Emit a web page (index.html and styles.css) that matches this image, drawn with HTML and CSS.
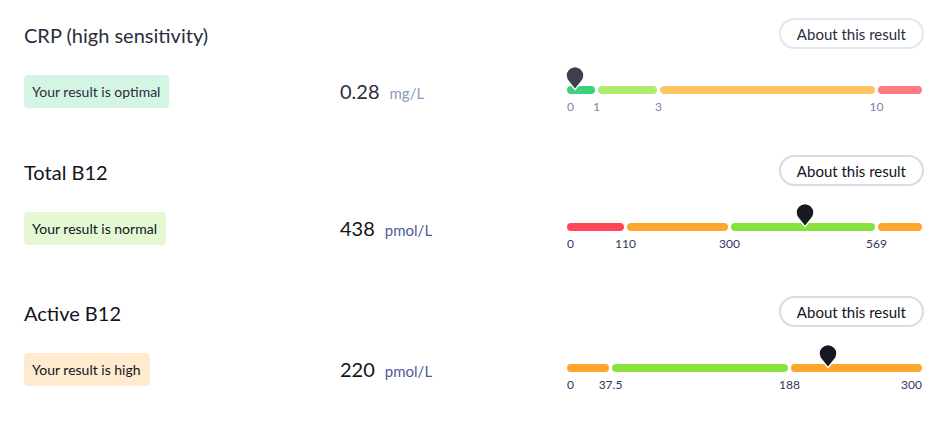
FILE: index.html
```html
<!DOCTYPE html>
<html lang="en">
<head>
<meta charset="utf-8">
<title>Results</title>
<link rel="stylesheet" href="styles.css">
</head>
<body>
<main class="results">

  <section class="result result--dim">
    <div class="result__head">
      <h2 class="result__title">CRP (high sensitivity)</h2>
      <button class="about-btn" type="button">About this result</button>
    </div>
    <div class="result__body">
      <div class="col-status"><span class="badge badge--optimal">Your result is optimal</span></div>
      <div class="col-value"><span class="value">0.28</span><span class="unit">mg/L</span></div>
      <div class="col-range">
        <div class="scale">
          <div class="seg seg--dgreen-dim" style="flex-grow:28"><div class="seg__bar"></div><div class="seg__ticks"><span class="tick tick--first">0</span></div></div>
          <div class="seg seg--lime-dim" style="flex-grow:59"><div class="seg__bar"></div><div class="seg__ticks"><span class="tick">1</span></div></div>
          <div class="seg seg--orange-dim" style="flex-grow:215"><div class="seg__bar"></div><div class="seg__ticks"><span class="tick">3</span></div></div>
          <div class="seg seg--red-dim" style="flex-grow:44"><div class="seg__bar"></div><div class="seg__ticks"><span class="tick">10</span></div></div>
          <svg class="pin" style="left:2.25%" viewBox="0 0 20 26" width="20" height="26" aria-hidden="true"><path d="M10 24.6 L4 17.2 A9 9 0 1 1 16 17.2 Z"/></svg>
        </div>
      </div>
    </div>
  </section>

  <section class="result">
    <div class="result__head">
      <h2 class="result__title">Total B12</h2>
      <button class="about-btn" type="button">About this result</button>
    </div>
    <div class="result__body">
      <div class="col-status"><span class="badge badge--normal">Your result is normal</span></div>
      <div class="col-value"><span class="value">438</span><span class="unit">pmol/L</span></div>
      <div class="col-range">
        <div class="scale">
          <div class="seg seg--red" style="flex-grow:57"><div class="seg__bar"></div><div class="seg__ticks"><span class="tick tick--first">0</span></div></div>
          <div class="seg seg--orange" style="flex-grow:101"><div class="seg__bar"></div><div class="seg__ticks"><span class="tick">110</span></div></div>
          <div class="seg seg--lime" style="flex-grow:144"><div class="seg__bar"></div><div class="seg__ticks"><span class="tick">300</span></div></div>
          <div class="seg seg--orange" style="flex-grow:44"><div class="seg__bar"></div><div class="seg__ticks"><span class="tick">569</span></div></div>
          <svg class="pin" style="left:67.04%" viewBox="0 0 20 26" width="20" height="26" aria-hidden="true"><path d="M10 24.6 L4 17.2 A9 9 0 1 1 16 17.2 Z"/></svg>
        </div>
      </div>
    </div>
  </section>

  <section class="result">
    <div class="result__head">
      <h2 class="result__title">Active B12</h2>
      <button class="about-btn" type="button">About this result</button>
    </div>
    <div class="result__body">
      <div class="col-status"><span class="badge badge--high">Your result is high</span></div>
      <div class="col-value"><span class="value">220</span><span class="unit">pmol/L</span></div>
      <div class="col-range">
        <div class="scale">
          <div class="seg seg--orange" style="flex-grow:42"><div class="seg__bar"></div><div class="seg__ticks"><span class="tick tick--first">0</span></div></div>
          <div class="seg seg--lime" style="flex-grow:176"><div class="seg__bar"></div><div class="seg__ticks"><span class="tick">37.5</span></div></div>
          <div class="seg seg--orange" style="flex-grow:131"><div class="seg__bar"></div><div class="seg__ticks"><span class="tick">188</span><span class="tick tick--last">300</span></div></div>
          <svg class="pin" style="left:73.6%" viewBox="0 0 20 26" width="20" height="26" aria-hidden="true"><path d="M10 24.6 L4 17.2 A9 9 0 1 1 16 17.2 Z"/></svg>
        </div>
      </div>
    </div>
  </section>

</main>
</body>
</html>
```

FILE: styles.css
```css
* { box-sizing: border-box; }

body {
  margin: 0;
  background: #ffffff;
  font-family: Lato, "Noto Sans", sans-serif;
  color: #12141c;
}

.results {
  padding: 0 26px 0 24px;
}

.result {
  padding: 18px 0 27px;
}

.result--dim {
  padding-bottom: 23px;
}

.result__head {
  display: flex;
  justify-content: space-between;
  align-items: center;
  height: 31px;
}

.result__title {
  margin: 0;
  padding-top: 3px;
  font-size: 20px;
  font-weight: 400;
  line-height: 24px;
  color: #12141c;
}

.about-btn {
  height: 31px;
  padding: 0 16px;
  border: 2px solid #d8dae9;
  border-radius: 16px;
  background: #ffffff;
  font-family: Lato, "Noto Sans", sans-serif;
  font-size: 15px;
  color: #12141c;
  cursor: pointer;
}

.result__body {
  display: grid;
  grid-template-columns: 316px 227px 1fr;
  margin-top: 26px;
  padding-right: 2px;
}

.badge {
  display: inline-flex;
  align-items: center;
  height: 33px;
  padding: 0 9px 0 8px;
  border-radius: 4px;
  font-size: 14px;
  color: #12141c;
}

.badge--optimal { background: #d5f5e4; color: #2a2e3c; }
.badge--normal { background: #e4f8d3; }
.badge--high { background: #feebcf; }

.col-value {
  display: flex;
  align-items: baseline;
  gap: 10px;
  height: 33px;
  line-height: 33px;
}

.value {
  font-size: 20px;
  color: #12141c;
}

.unit {
  font-size: 15px;
  color: #4f5b96;
}

.col-range {
  padding-top: 11px;
}

.scale {
  position: relative;
  display: flex;
  gap: 3px;
}

.seg {
  flex-basis: 0;
  display: flex;
  flex-direction: column;
  min-width: 0;
}

.seg__bar {
  height: 8px;
  border-radius: 4px;
}

.seg__ticks {
  display: flex;
  justify-content: space-between;
  margin-top: 6px;
}

.tick {
  font-size: 12px;
  line-height: 14px;
  color: #2f3566;
  white-space: nowrap;
  transform: translateX(calc(-50% - 1.5px));
}

.tick--first { transform: none; }
.tick--last { transform: none; }

.seg--red .seg__bar { background: #ff4656; }
.seg--orange .seg__bar { background: #ffa62e; }
.seg--lime .seg__bar { background: #86e23c; }

.seg--dgreen-dim .seg__bar { background: #3ad27a; }
.seg--lime-dim .seg__bar { background: #aeeb70; }
.seg--orange-dim .seg__bar { background: #ffc562; }
.seg--red-dim .seg__bar { background: #ff7a85; }

.pin {
  position: absolute;
  top: -21px;
  margin-left: -10px;
  fill: #161922;
  stroke: #ffffff;
  stroke-width: 1.5;
  stroke-linejoin: round;
}

.result--dim .result__title,
.result--dim .value,
.result--dim .about-btn { color: #2a2e3c; }
.result--dim .about-btn { border-color: #e3e5f1; }
.result--dim .unit { color: #8d96c6; }
.result--dim .tick { color: #7a83a6; }
.result--dim .pin { fill: #3c4050; }
```
